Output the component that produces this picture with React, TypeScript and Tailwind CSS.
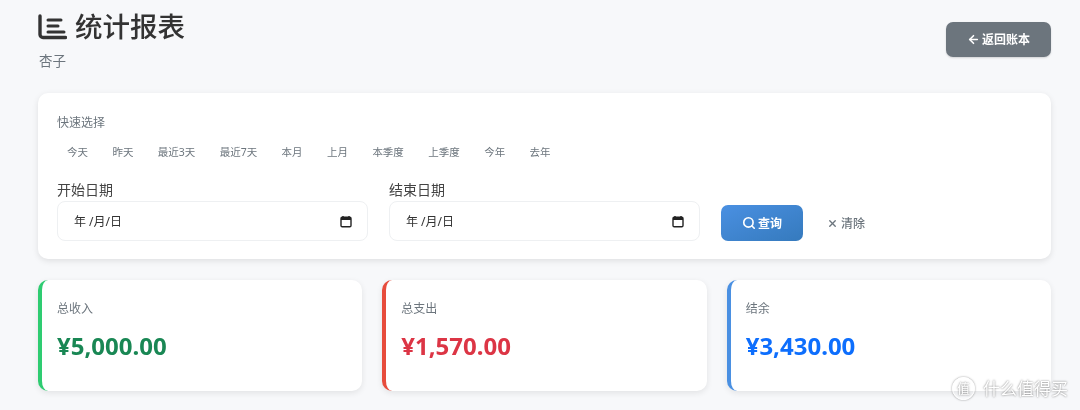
import { ArrowLeft, Search, X } from "lucide-react";

const quick = ["今天", "昨天", "最近3天", "最近7天", "本月", "上月", "本季度", "上季度", "今年", "去年"];

function Cal() {
  return (
    <svg width="12" height="13" viewBox="0 0 12 13" className="text-[#222]">
      <path d="M3 1v2M9 1v2" stroke="currentColor" strokeWidth="1.4" />
      <rect x="1" y="2.2" width="10" height="9.6" rx="1.2" fill="none" stroke="currentColor" strokeWidth="1.4" />
      <rect x="1" y="2.2" width="10" height="2.8" fill="currentColor" />
    </svg>
  );
}

function DateField({ label }: { label: string }) {
  return (
    <div className="flex flex-col w-[311px]">
      <div className="text-[14px] leading-[20px] text-[#444] mb-[1px]">{label}</div>
      <div className="h-[40px] rounded-[8px] border border-[#eef0f2] bg-white flex items-center justify-between pl-[16px] pr-[15px] text-[12px] text-[#333]">
        <span className="pt-[2px]">年 /月/日</span>
        <Cal />
      </div>
    </div>
  );
}

function Stat({ label, value, border, color }: { label: string; value: string; border: string; color: string }) {
  return (
    <div className={`h-[111px] rounded-[10px] bg-white border-l-4 ${border} shadow-[0_2px_6px_rgba(0,0,0,0.09)] pl-[15px] pt-[21px]`}>
      <div className="text-[12px] leading-[16px] text-[#6c757d]">{label}</div>
      <div className={`mt-[13px] text-[24px] leading-[32px] font-bold ${color}`}>{value}</div>
    </div>
  );
}

export default function App() {
  return (
    <div className="relative w-[1080px] h-[410px] overflow-hidden bg-[#f7f8fa] pl-[38px] pr-[29px] blur-[0.6px] font-['Noto_Sans','Noto_Sans_CJK_SC',sans-serif]">
      <div className="flex justify-between h-[93px]">
        <div className="pt-[10px]">
          <div className="flex items-center gap-[8px] text-[#333]">
            <svg width="29" height="26" viewBox="0 0 29 26">
              <path d="M2 2v18.5a3 3 0 0 0 3 3h22.5" fill="none" stroke="#333" strokeWidth="3.4" strokeLinecap="round" />
              <path d="M10 6h13M10 12h10M10 18h16" fill="none" stroke="#333" strokeWidth="3" strokeLinecap="round" />
            </svg>
            <span className="text-[27.5px] leading-[34px] font-medium">统计报表</span>
          </div>
          <div className="mt-[8px] pl-[1px] text-[13.5px] leading-[18px] text-[#6c757d]">杏子</div>
        </div>
        <button className="mt-[22px] w-[105px] h-[35px] rounded-[7px] bg-[#6c757d] text-white text-[12px] font-bold flex items-center justify-center gap-[2px] shadow-[0_1px_2px_rgba(0,0,0,0.15)]">
          <ArrowLeft size={13} strokeWidth={3} />
          返回账本
        </button>
      </div>

      <div className="h-[166px] rounded-[10px] bg-white shadow-[0_2px_6px_rgba(0,0,0,0.1)] px-[19px] pt-[22px]">
        <div className="text-[12px] leading-[16px] text-[#6c757d]">快速选择</div>
        <div className="flex gap-[24.4px] pl-[10px] mt-[13px] text-[10.5px] leading-[16px] text-[#6c757d]">
          {quick.map((q) => (
            <span key={q}>{q}</span>
          ))}
        </div>
        <div className="flex items-end mt-[20px]">
          <DateField label="开始日期" />
          <div className="w-[21px]" />
          <DateField label="结束日期" />
          <div className="w-[21px]" />
          <button className="w-[82px] h-[36px] rounded-[7px] bg-gradient-to-br from-[#4a90e2] to-[#357abd] text-white text-[12px] font-bold flex items-center justify-center gap-[2px]">
            <Search size={14} strokeWidth={2.8} />
            <span className="pt-[2px]">查询</span>
          </button>
          <div className="h-[36px] ml-[24px] flex items-center gap-[3px] text-[#6c757d] text-[12px] font-medium">
            <X size={11} strokeWidth={3} />
            <span className="pt-[2px]">清除</span>
          </div>
        </div>
      </div>

      <div className="grid grid-cols-3 gap-[20px] mt-[21px]">
        <Stat label="总收入" value="¥5,000.00" border="border-[#2ecc71]" color="text-[#198754]" />
        <Stat label="总支出" value="¥1,570.00" border="border-[#e74c3c]" color="text-[#dc3545]" />
        <Stat label="结余" value="¥3,430.00" border="border-[#4a90e2]" color="text-[#0d6efd]" />
      </div>

      <div className="absolute left-[952px] top-[377px] flex items-center gap-[8px] text-white [text-shadow:0_0_2px_rgba(90,90,90,0.9)]">
        <div className="w-[23px] h-[23px] rounded-full border border-white flex items-center justify-center text-[13px] leading-none shadow-[0_0_2px_rgba(90,90,90,0.7)]">值</div>
        <span className="text-[17px] leading-[22px]">什么值得买</span>
      </div>
    </div>
  );
}
